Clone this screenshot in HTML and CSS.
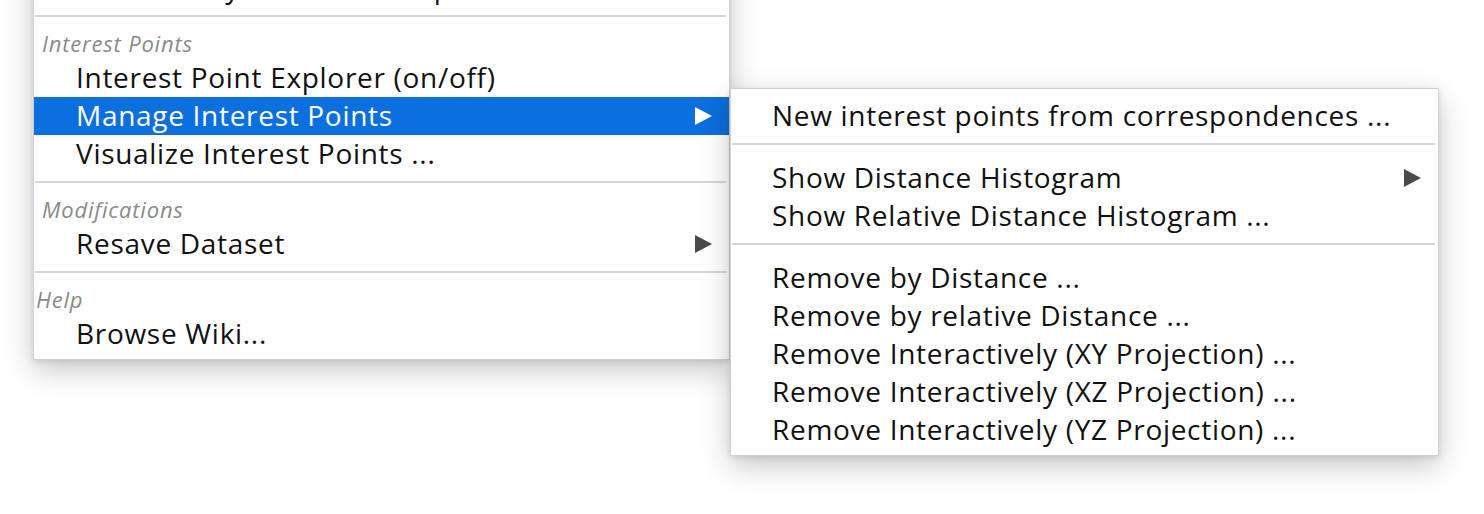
FILE: index.html
```html
<!DOCTYPE html>
<html lang="en">
<head>
<meta charset="utf-8">
<title>Menu</title>
<link rel="stylesheet" href="styles.css">
</head>
<body>
<div class="stage">
  <div class="menu main-menu">
    <div class="item">Edit Already Paired Overlaps ...</div>
    <div class="sep"></div>
    <div class="header">Interest Points</div>
    <div class="item">Interest Point Explorer (on/off)</div>
    <div class="item active">
      <span class="label">Manage Interest Points</span>
      <span class="arrow"></span>
      <div class="menu sub-menu">
        <div class="item">New interest points from correspondences ...</div>
        <div class="sep"></div>
        <div class="item"><span class="label">Show Distance Histogram</span><span class="arrow"></span></div>
        <div class="item">Show Relative Distance Histogram ...</div>
        <div class="sep"></div>
        <div class="item">Remove by Distance ...</div>
        <div class="item">Remove by relative Distance ...</div>
        <div class="item">Remove Interactively (XY Projection) ...</div>
        <div class="item">Remove Interactively (XZ Projection) ...</div>
        <div class="item">Remove Interactively (YZ Projection) ...</div>
      </div>
    </div>
    <div class="item">Visualize Interest Points ...</div>
    <div class="sep"></div>
    <div class="header">Modifications</div>
    <div class="item"><span class="label">Resave Dataset</span><span class="arrow"></span></div>
    <div class="sep"></div>
    <div class="header header-tight">Help</div>
    <div class="item">Browse Wiki...</div>
  </div>
</div>
</body>
</html>
```
FILE: styles.css
```css
html, body {
  margin: 0;
  padding: 0;
  background: #ffffff;
  overflow: hidden;
}

.stage {
  width: 1484px;
  height: 514px;
  overflow: hidden;
  font-family: "Open Sans", "Lato", sans-serif;
  color: #111111;
}

.menu {
  background: #ffffff;
  box-sizing: border-box;
  border: 1px solid rgba(0, 0, 0, 0.18);
  box-shadow: 0 10px 28px rgba(0, 0, 0, 0.22), 0 2px 6px rgba(0, 0, 0, 0.10);
}

.main-menu {
  position: relative;
  width: 697px;
  margin-left: 33px;
  margin-top: -40px;
  padding: 8px 0 6px 0;
}

.sub-menu {
  position: absolute;
  left: 696px;
  top: -9px;
  width: 709px;
  padding: 8px 0 6px 0;
  z-index: 2;
}

.item {
  position: relative;
  box-sizing: border-box;
  display: flex;
  align-items: center;
  justify-content: space-between;
  height: 38px;
  padding: 0 17px 2px 42px;
  font-size: 28px;
  line-height: 36px;
  letter-spacing: 0.7px;
  white-space: nowrap;
}

.sub-menu .item {
  padding-left: 41px;
  color: #111111;
}

.item.active {
  background: #0c6fde;
  color: #ffffff;
}

.arrow {
  width: 0;
  height: 0;
  margin-top: 2px;
  border-top: 9px solid transparent;
  border-bottom: 9px solid transparent;
  border-left: 17px solid #4a4a4a;
}

.item.active > .arrow {
  border-left-color: #ffffff;
}

.sep {
  height: 2px;
  margin: 8px 3px 14px 1px;
  background: #d6d6d6;
}

.header {
  box-sizing: border-box;
  height: 28px;
  line-height: 25px;
  padding: 0 0 3px 8px;
  font-size: 22px;
  letter-spacing: 0.8px;
  font-style: italic;
  color: #8a8a8a;
}

.header-tight {
  padding-left: 2px;
}
```
